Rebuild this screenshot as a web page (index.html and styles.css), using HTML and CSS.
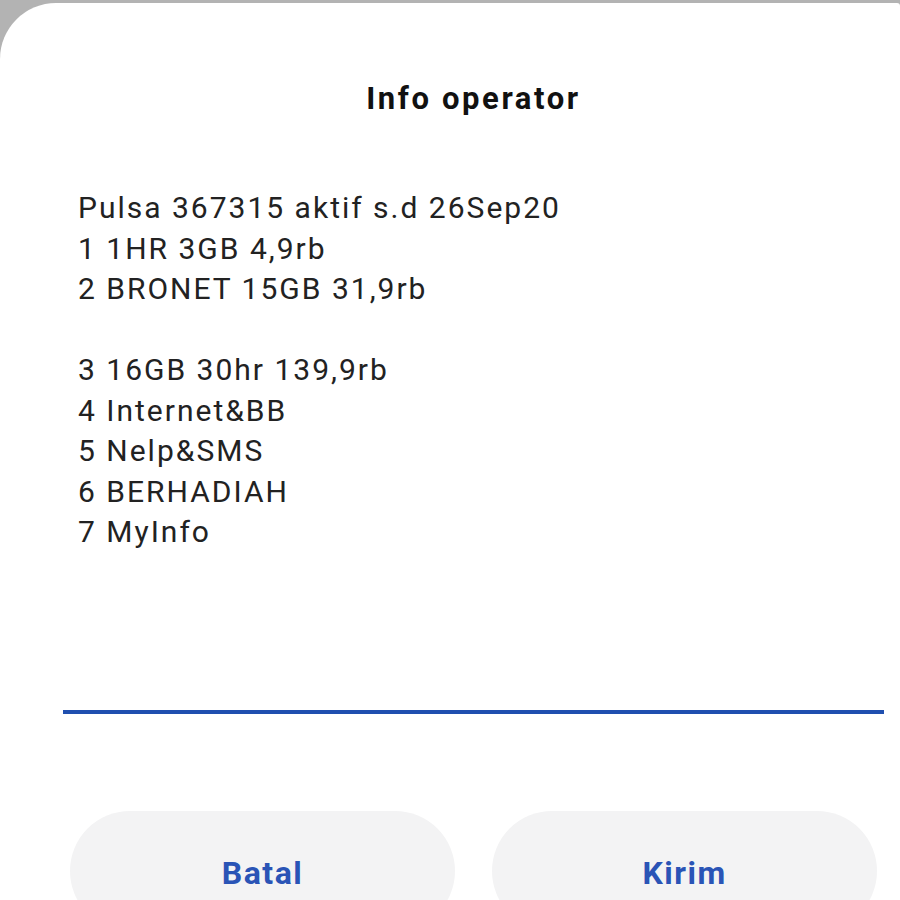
FILE: index.html
```html
<!DOCTYPE html>
<html lang="id">

<head>
    <meta charset="UTF-8">
    <meta name="viewport" content="width=device-width, initial-scale=1.0">
    <title>Info operator</title>
    <link rel="stylesheet" href="styles.css">
</head>

<body>
    <div class="dialog">
        <h1 class="dialog-title">Info operator</h1>

        <div class="message">
            <div>Pulsa 367315 aktif s.d 26Sep20</div>
            <div>1 1HR 3GB 4,9rb</div>
            <div>2 BRONET 15GB 31,9rb</div>
            <div>&nbsp;</div>
            <div>3 16GB 30hr 139,9rb</div>
            <div>4 Internet&amp;BB</div>
            <div>5 Nelp&amp;SMS</div>
            <div>6 BERHADIAH</div>
            <div>7 MyInfo</div>
        </div>

        <div class="reply-input"></div>

        <div class="actions">
            <button class="action-button">Batal</button>
            <button class="action-button">Kirim</button>
        </div>
    </div>
</body>

</html>
```

FILE: styles.css
```css
html, body {
    height: 100%;
}

body {
    margin: 0;
    padding: 0;
    background-color: #b3b3b3;
    font-family: Roboto, 'Noto Sans', sans-serif;
    overflow: hidden;
}

/* dialog runs off the right edge of the screenshot, so the content box is 63..884 */
.dialog {
    margin-top: 3px;
    height: 897px;
    overflow: hidden;
    background-color: #fff;
    border-radius: 56px 3px 0 0;
    padding: 76px 16px 0 63px;
    box-sizing: border-box;
}

.dialog-title {
    margin: 0;
    font-size: 31px;
    line-height: 40px;
    font-weight: 700;
    letter-spacing: 2.6px;
    color: #111;
    text-align: center;
}

.message {
    margin-top: 69px;
    padding-left: 15px;
    font-size: 30px;
    line-height: 40.5px;
    letter-spacing: 2px;
    color: #222;
}

.reply-input {
    margin-top: 157px;
    height: 4px;
    background-color: #1f4faf;
}

.actions {
    display: flex;
    gap: 37px;
    margin-top: 97px;
    padding: 0 7px;
}

.action-button {
    flex: 1;
    height: 120px;
    border: none;
    border-radius: 60px;
    background-color: #f3f3f4;
    color: #2a54b6;
    font-family: Roboto, 'Noto Sans', sans-serif;
    font-size: 32px;
    font-weight: 700;
    line-height: 40px;
    letter-spacing: 1.5px;
    padding: 42px 0 0;
    display: flex;
    justify-content: center;
    align-items: flex-start;
}
```
